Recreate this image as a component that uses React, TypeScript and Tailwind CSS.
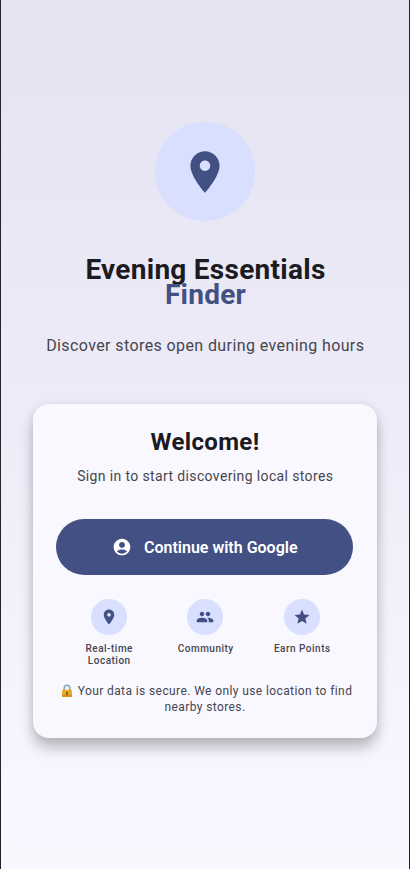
import type { ReactNode } from "react";

const PIN =
  "M12 2C8.13 2 5 5.13 5 9c0 5.25 7 13 7 13s7-7.75 7-13c0-3.87-3.13-7-7-7zm0 9.5c-1.38 0-2.5-1.12-2.5-2.5s1.12-2.5 2.5-2.5 2.5 1.12 2.5 2.5-1.12 2.5-2.5 2.5z";
const PEOPLE =
  "M16 11c1.66 0 2.99-1.34 2.99-3S17.66 5 16 5c-1.66 0-3 1.34-3 3s1.34 3 3 3zm-8 0c1.66 0 2.99-1.34 2.99-3S9.66 5 8 5C6.34 5 5 6.34 5 8s1.34 3 3 3zm0 2c-2.33 0-7 1.17-7 3.5V19h14v-2.5c0-2.33-4.67-3.5-7-3.5zm8 0c-.29 0-.62.02-.97.05 1.16.84 1.97 1.97 1.97 3.45V19h6v-2.5c0-2.33-4.67-3.5-7-3.5z";
const STAR = "M12 17.27L18.18 21l-1.64-7.03L22 9.24l-7.19-.61L12 2 9.19 8.63 2 9.24l5.46 4.73L5.82 21z";
const ACCOUNT =
  "M12 2C6.48 2 2 6.48 2 12s4.48 10 10 10 10-4.48 10-10S17.52 2 12 2zm0 4c1.93 0 3.5 1.57 3.5 3.5S13.93 13 12 13s-3.5-1.57-3.5-3.5S10.07 6 12 6zm0 14c-2.03 0-4.43-.82-6.14-2.88C7.55 15.8 9.68 15 12 15s4.45.8 6.14 2.12C16.43 19.18 14.03 20 12 20z";

function Icon({ path, className }: { path: string; className: string }) {
  return (
    <svg viewBox="0 0 24 24" fill="currentColor" className={className}>
      <path d={path} />
    </svg>
  );
}

function Lock() {
  return (
    <svg viewBox="0 0 12 14" className="mr-[5px] inline-block h-[14px] w-[12px] align-[-3px]">
      <path d="M3.2 7V4.1a2.8 2.8 0 0 1 5.6 0V7" fill="none" stroke="#7fa6b5" strokeWidth="1.5" />
      <rect x="1.1" y="5.7" width="9.8" height="7.3" rx="1.2" fill="#e9a825" />
      <path d="M1.1 10.7h9.8v1.1a1.2 1.2 0 0 1-1.2 1.2H2.3a1.2 1.2 0 0 1-1.2-1.2z" fill="#d98f16" />
      <circle cx="6" cy="8.8" r="0.9" fill="#5b451c" />
      <path d="M5.6 9h.8l.2 2.2H5.4z" fill="#5b451c" />
    </svg>
  );
}

function Feature({ path, children }: { path: string; children: ReactNode }) {
  return (
    <div className="flex w-[96.5px] flex-col items-center">
      <div className="flex size-9 items-center justify-center rounded-full bg-[#d8dfff]">
        <Icon path={path} className="size-[18px]" />
      </div>
      <p className="mt-2 pl-[1.5px] text-center text-[10px] leading-[12px] font-medium tracking-[0.5px] whitespace-nowrap text-[#45464f]">
        {children}
      </p>
    </div>
  );
}

export default function App() {
  return (
    <main className="flex h-[869px] w-[410px] flex-col items-center border-x border-[#252527] bg-linear-to-b from-[#e4e3f1] via-[#efecf9] to-[#faf8ff] pt-[121.5px] font-['Roboto',sans-serif] text-[#435083]">
      <div className="flex size-[99.5px] items-center justify-center rounded-full bg-[#d8dfff] pt-px">
        <Icon path={PIN} className="size-[50px]" />
      </div>
      <h1 className="mt-[35.5px] pl-px text-center text-[28px] leading-[25px] font-bold tracking-[0.27px] whitespace-nowrap">
        <span className="block text-[#1b1b21]">Evening Essentials</span>
        <span className="block">Finder</span>
      </h1>
      <p className="mt-[27.5px] pl-[0.5px] text-base tracking-[0.4px] whitespace-nowrap text-[#45464f]">
        Discover stores open during evening hours
      </p>

      <section className="mt-[46px] flex h-[334px] w-[344px] flex-col items-center rounded-[16px] bg-[#faf8ff] px-6 pt-[22px] shadow-[0_10px_14px_rgba(0,0,0,0.24),0_0_8px_rgba(0,0,0,0.08)]">
        <h2 className="text-[24px] leading-8 font-bold tracking-[0.35px] text-[#1b1b21]">Welcome!</h2>
        <p className="mt-[8px] pl-[0.5px] text-sm tracking-[0.37px] whitespace-nowrap text-[#45464f]">
          Sign in to start discovering local stores
        </p>
        <button className="mt-[33px] mr-[0.5px] flex h-14 w-[297px] items-center justify-center gap-3 rounded-full bg-[#435083] text-white">
          <Icon path={ACCOUNT} className="size-5" />
          <span className="pt-px text-base font-semibold whitespace-nowrap">Continue with Google</span>
        </button>
        <div className="mt-6 flex justify-center">
          <Feature path={PIN}>
            Real-time
            <br />
            Location
          </Feature>
          <Feature path={PEOPLE}>Community</Feature>
          <Feature path={STAR}>Earn Points</Feature>
        </div>
        <p className="mt-4 text-center text-xs leading-4 tracking-[0.4px] whitespace-nowrap text-[#45464f]">
          <span className="block pl-[3px]">
            <Lock />
            Your data is secure. We only use location to find
          </span>
          <span className="block">nearby stores.</span>
        </p>
      </section>
    </main>
  );
}
